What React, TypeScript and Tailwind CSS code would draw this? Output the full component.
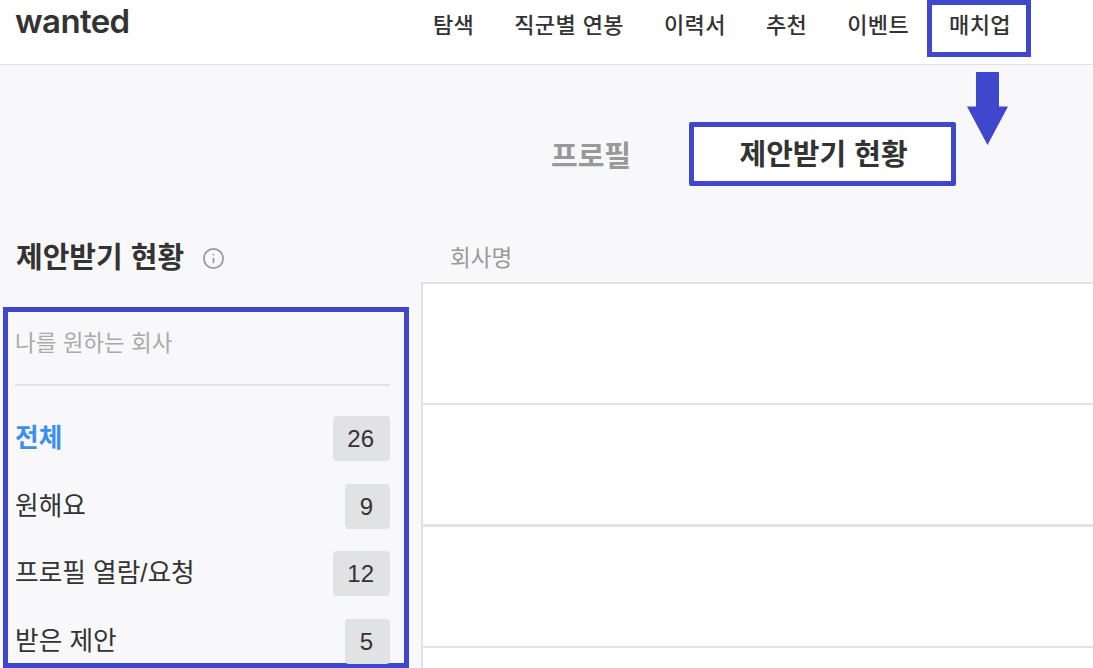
import React from 'react';
import { Info } from 'lucide-react';

const FONT = "font-['Liberation_Sans','Noto_Sans_CJK_KR',sans-serif]";

const navItems = ['탐색', '직군별 연봉', '이력서', '추천', '이벤트'];

const statusRows = [
  { label: '전체', count: 26, active: true },
  { label: '원해요', count: 9 },
  { label: '프로필 열람/요청', count: 12 },
  { label: '받은 제안', count: 5 },
];

export default function App() {
  return (
    <div className={`relative h-[668px] overflow-hidden bg-[#f8f8fa] text-[#333333] ${FONT}`}>
      {/* Header */}
      <header className="flex h-[65px] items-start border-b border-[#e1e2e3] bg-white pl-[15px] pr-[62px]">
        <span className="font-['Inter',sans-serif] text-[33px] font-semibold leading-[43px] tracking-[-0.6px] text-[#333333]">
          wanted
        </span>
        <nav className="ml-auto flex h-[57px] items-start gap-[40px]">
          {navItems.map(item => (
            <a key={item} className="mt-[10px] text-[22px] font-medium leading-[32px] tracking-[0.4px]">
              {item}
            </a>
          ))}
          <a className="-ml-[22px] h-[57px] border-[5px] border-[#3f48cc] pl-[17px] pr-[15px] pt-[5px] text-[22px] font-medium leading-[32px] tracking-[0.4px]">
            매치업
          </a>
        </nav>
      </header>

      {/* Tabs */}
      <div className="flex h-[121px] items-end pl-[551px]">
        <span className="mb-[9px] text-[29px] font-bold leading-[40px] text-[#999999]">프로필</span>
        <span className="ml-[58px] flex h-[64px] w-[267px] items-center justify-center rounded-[2px] border-[5px] border-[#3f48cc] bg-white pl-[2px] pt-[3px] text-[29px] font-bold">
          제안받기 현황
        </span>
      </div>

      <div className="flex">
        {/* Sidebar */}
        <aside className="w-[421px] shrink-0 pl-[3px]">
          <div className="flex h-[121px] items-center gap-[18px] pl-[13px] pt-[23px]">
            <h2 className="text-[29px] font-bold leading-[40px]">제안받기 현황</h2>
            <Info size={23} strokeWidth={1.8} className="mt-[1px] text-[#999999]" />
          </div>
          <div className="h-[361px] w-[406px] border-[5px] border-[#3f48cc] pl-[7px] pr-[14px]">
            <p className="flex h-[74px] items-center border-b-2 border-[#e1e2e3] pb-[8px] text-[22.5px] text-[#aaaaaa]">
              나를 원하는 회사
            </p>
            <ul className="mt-[30px] flex flex-col gap-[22.5px]">
              {statusRows.map(row => (
                <li key={row.label} className="flex h-[45px] items-center justify-between">
                  <span className={row.active ? 'text-[25.7px] font-bold text-[#3b90ed]' : 'text-[25.7px]'}>
                    {row.label}
                  </span>
                  <span className="min-w-[45px] rounded-[4px] bg-[#e1e2e3] pl-[14px] pr-[16px] text-center text-[24px] leading-[45px]">
                    {row.count}
                  </span>
                </li>
              ))}
            </ul>
          </div>
        </aside>

        {/* Company list */}
        <section className="flex-1">
          <div className="flex h-[96px] items-center pl-[29px] pt-[50px] text-[22.5px] text-[#999999]">
            회사명
          </div>
          <div className="border-l-2 border-[#e1e2e3] bg-white">
            <div className="h-[121px] border-t-2 border-[#e1e2e3]" />
            <div className="h-[121px] border-t-2 border-[#e1e2e3]" />
            <div className="h-[122px] border-t-[3px] border-[#e1e2e3]" />
            <div className="h-[121px] border-t-2 border-[#e1e2e3]" />
          </div>
        </section>
      </div>

      {/* Annotation arrow */}
      <svg className="absolute left-[966px] top-[71px]" width="44" height="76" viewBox="0 0 44 76">
        <path d="M10 1.5 Q10 1 11 1 H32 Q33 1 33 2 V35.5 H42 L21.5 74 L1 35.5 H10 Z" fill="#3f48cc" />
      </svg>
    </div>
  );
}
